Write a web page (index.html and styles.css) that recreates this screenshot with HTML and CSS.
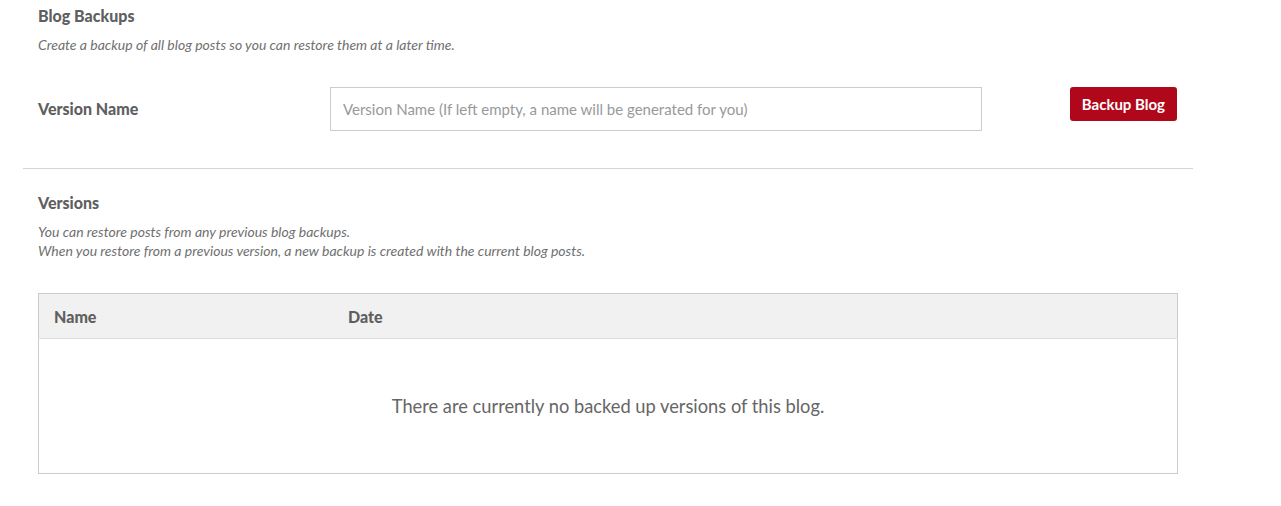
FILE: index.html
```html
<!DOCTYPE html>
<html lang="en">
<head>
    <meta charset="UTF-8">
    <meta name="viewport" content="width=device-width, initial-scale=1.0">
    <title>Blog Backups</title>
    <link rel="stylesheet" href="styles.css">
</head>
<body>
    <div class="container">
        <section class="section">
            <h4 class="title">Blog Backups</h4>
            <p class="help">Create a backup of all blog posts so you can restore them at a later time.</p>
            <div class="form-row">
                <label class="label" for="version">Version Name</label>
                <div class="field">
                    <input type="text" id="version" placeholder="Version Name (If left empty, a name will be generated for you)">
                </div>
                <div class="actions">
                    <button class="btn">Backup Blog</button>
                </div>
            </div>
        </section>

        <hr class="divider">

        <section class="section">
            <h4 class="title">Versions</h4>
            <p class="help">You can restore posts from any previous blog backups.<br>When you restore from a previous version, a new backup is created with the current blog posts.</p>
            <table class="versions">
                <thead>
                    <tr>
                        <th class="col-name">Name</th>
                        <th>Date</th>
                    </tr>
                </thead>
                <tbody>
                    <tr>
                        <td colspan="2" class="empty">There are currently no backed up versions of this blog.</td>
                    </tr>
                </tbody>
            </table>
        </section>
    </div>
</body>
</html>
```

FILE: styles.css
```css
body {
    margin: 0;
    font-family: Lato, "Open Sans", sans-serif;
    color: #666;
    background: #fff;
}
.container {
    width: 1170px;
    margin-left: 23px;
}
.section {
    padding: 0 15px;
}
.title {
    margin: 0;
    padding-top: 6px;
    font-size: 16px;
    font-weight: 900;
    line-height: 20px;
    color: #5f5f5f;
}
.help {
    margin: 9px 0 0;
    font-size: 14px;
    font-style: italic;
    line-height: 19px;
    color: #707070;
}
.form-row {
    display: grid;
    grid-template-columns: 262px 652px 166px;
    column-gap: 30px;
    margin-top: 33px;
    align-items: start;
}
.label {
    font-size: 16px;
    font-weight: 900;
    line-height: 44px;
    color: #5f5f5f;
}
.field input {
    box-sizing: border-box;
    width: 100%;
    height: 44px;
    padding: 0 12px;
    border: 1px solid #ccc;
    border-radius: 0;
    font-family: inherit;
    font-size: 15px;
    color: #555;
}
.field input::placeholder {
    color: #999;
}
.actions {
    display: flex;
    justify-content: flex-end;
    padding-right: 1px;
}
.btn {
    height: 34px;
    padding: 0 12px;
    border: none;
    border-radius: 3px;
    background: #b0071a;
    color: #fff;
    font-family: inherit;
    font-size: 15px;
    font-weight: bold;
    cursor: pointer;
}
.divider {
    margin: 37px 0 0;
    border: none;
    border-top: 1px solid #d4d4d4;
}
.section + .divider + .section {
    padding-top: 18px;
}
.versions {
    width: 100%;
    margin-top: 33px;
    border-collapse: collapse;
    border: 1px solid #ccc;
}
.versions th {
    height: 44px;
    padding: 0 15px;
    background: #f1f1f1;
    border-bottom: 1px solid #ddd;
    text-align: left;
    font-size: 16px;
    font-weight: 900;
    color: #5f5f5f;
}
.versions .col-name {
    width: 264px;
}
.empty {
    height: 132px;
    text-align: center;
    font-size: 18.3px;
    color: #666;
}
```
